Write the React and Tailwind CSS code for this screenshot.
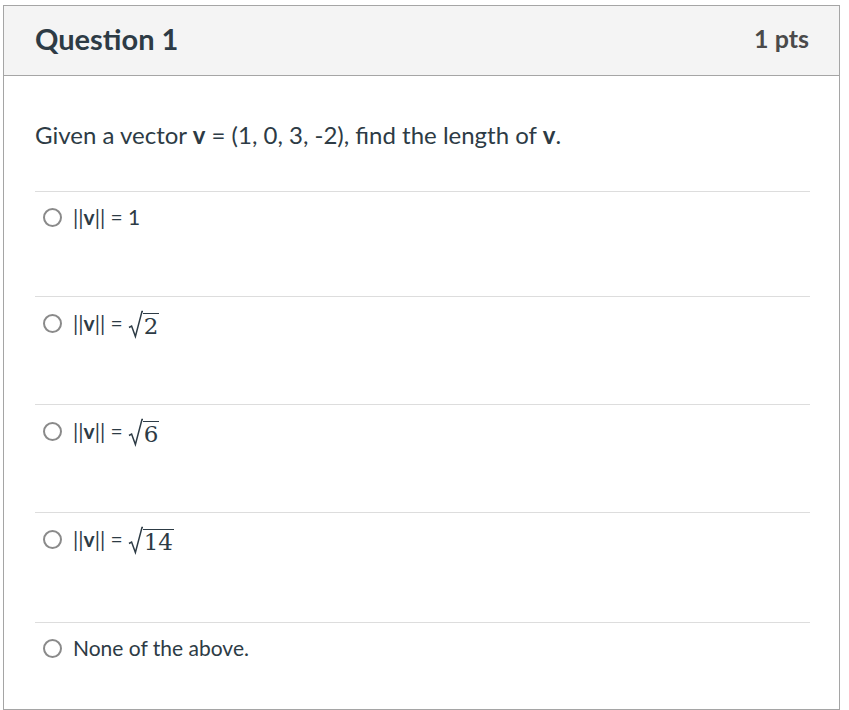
import React from "react";

const font = { fontFamily: "Lato, 'Liberation Sans', sans-serif" };

function Radio() {
  return (
    <span className="inline-block w-[19px] h-[19px] rounded-full border-2 border-[#8a8a8a] bg-white shrink-0" />
  );
}

function Sqrt({ n }) {
  return (
    <span className="inline-flex items-end">
      <svg width="15" height="29" viewBox="0 0 15 29" className="shrink-0">
        <path d="M1 17.5 L3.6 16 L7.4 26.5 L14 1.4 L15 1.4" fill="none" stroke="#2d3b45" strokeWidth="1.5" strokeLinejoin="miter" />
      </svg>
      <span
        className="border-t-[1.5px] border-[#2d3b45] pl-[1px] pr-[1px] leading-[25px] text-[23px] text-[#2d3b45] mt-[1px]"
        style={{ fontFamily: "'DejaVu Serif', 'Liberation Serif', serif" }}
      >
        {n}
      </span>
    </span>
  );
}

function Norm() {
  return (
    <span>
      ||<span className="font-bold">v</span>|| =
    </span>
  );
}

export default function App() {
  const rows = [
    { key: 1, h: "h-[105px]", pt: "pt-[11px]", content: <span><Norm /> 1</span> },
    { key: 2, h: "h-[108px]", pt: "pt-[12px]", content: <span className="inline-flex items-end gap-[5px]"><Norm /><Sqrt n="2" /></span> },
    { key: 3, h: "h-[108px]", pt: "pt-[12px]", content: <span className="inline-flex items-end gap-[5px]"><Norm /><Sqrt n="6" /></span> },
    { key: 4, h: "h-[110px]", pt: "pt-[12px]", content: <span className="inline-flex items-end gap-[5px]"><Norm /><Sqrt n="14" /></span> },
    { key: 5, h: "h-[87px]", pt: "pt-[11px]", content: <span>None of the above.</span> },
  ];
  return (
    <div className="w-[849px] h-[710px] bg-white pt-[5px] pl-[3px]" style={font}>
      <div className="w-[837px] h-[705px] border border-[#a5a5a5] flex flex-col">
        <div className="h-[70px] bg-[#f4f4f4] border-b border-[#a5a5a5] flex items-center justify-between pl-[31px] pr-[30px] pb-[4px] shrink-0">
          <span className="text-[29px] font-bold text-[#2d3b45]">Question 1</span>
          <span className="text-[25px] font-bold text-[#4a4a4a]">1 pts</span>
        </div>
        <div className="pl-[31px] pr-[29px] flex flex-col">
          <div className="h-[115px] flex items-center pt-[8px] pb-[5px]">
            <p className="text-[24px] text-[#2d3b45]">
              Given a vector <span className="font-bold">v</span> = (1, 0, 3, -2), find the length of <span className="font-bold">v</span>.
            </p>
          </div>
          {rows.map((r) => (
            <div key={r.key} className={`${r.h} ${r.pt} border-t border-[#dddddd] flex items-start`}>
              <div className="flex items-center gap-[11px] pl-[8px] h-[28px] text-[21px] text-[#2d3b45]">
                <Radio />
                {r.content}
              </div>
            </div>
          ))}
        </div>
      </div>
    </div>
  );
}
